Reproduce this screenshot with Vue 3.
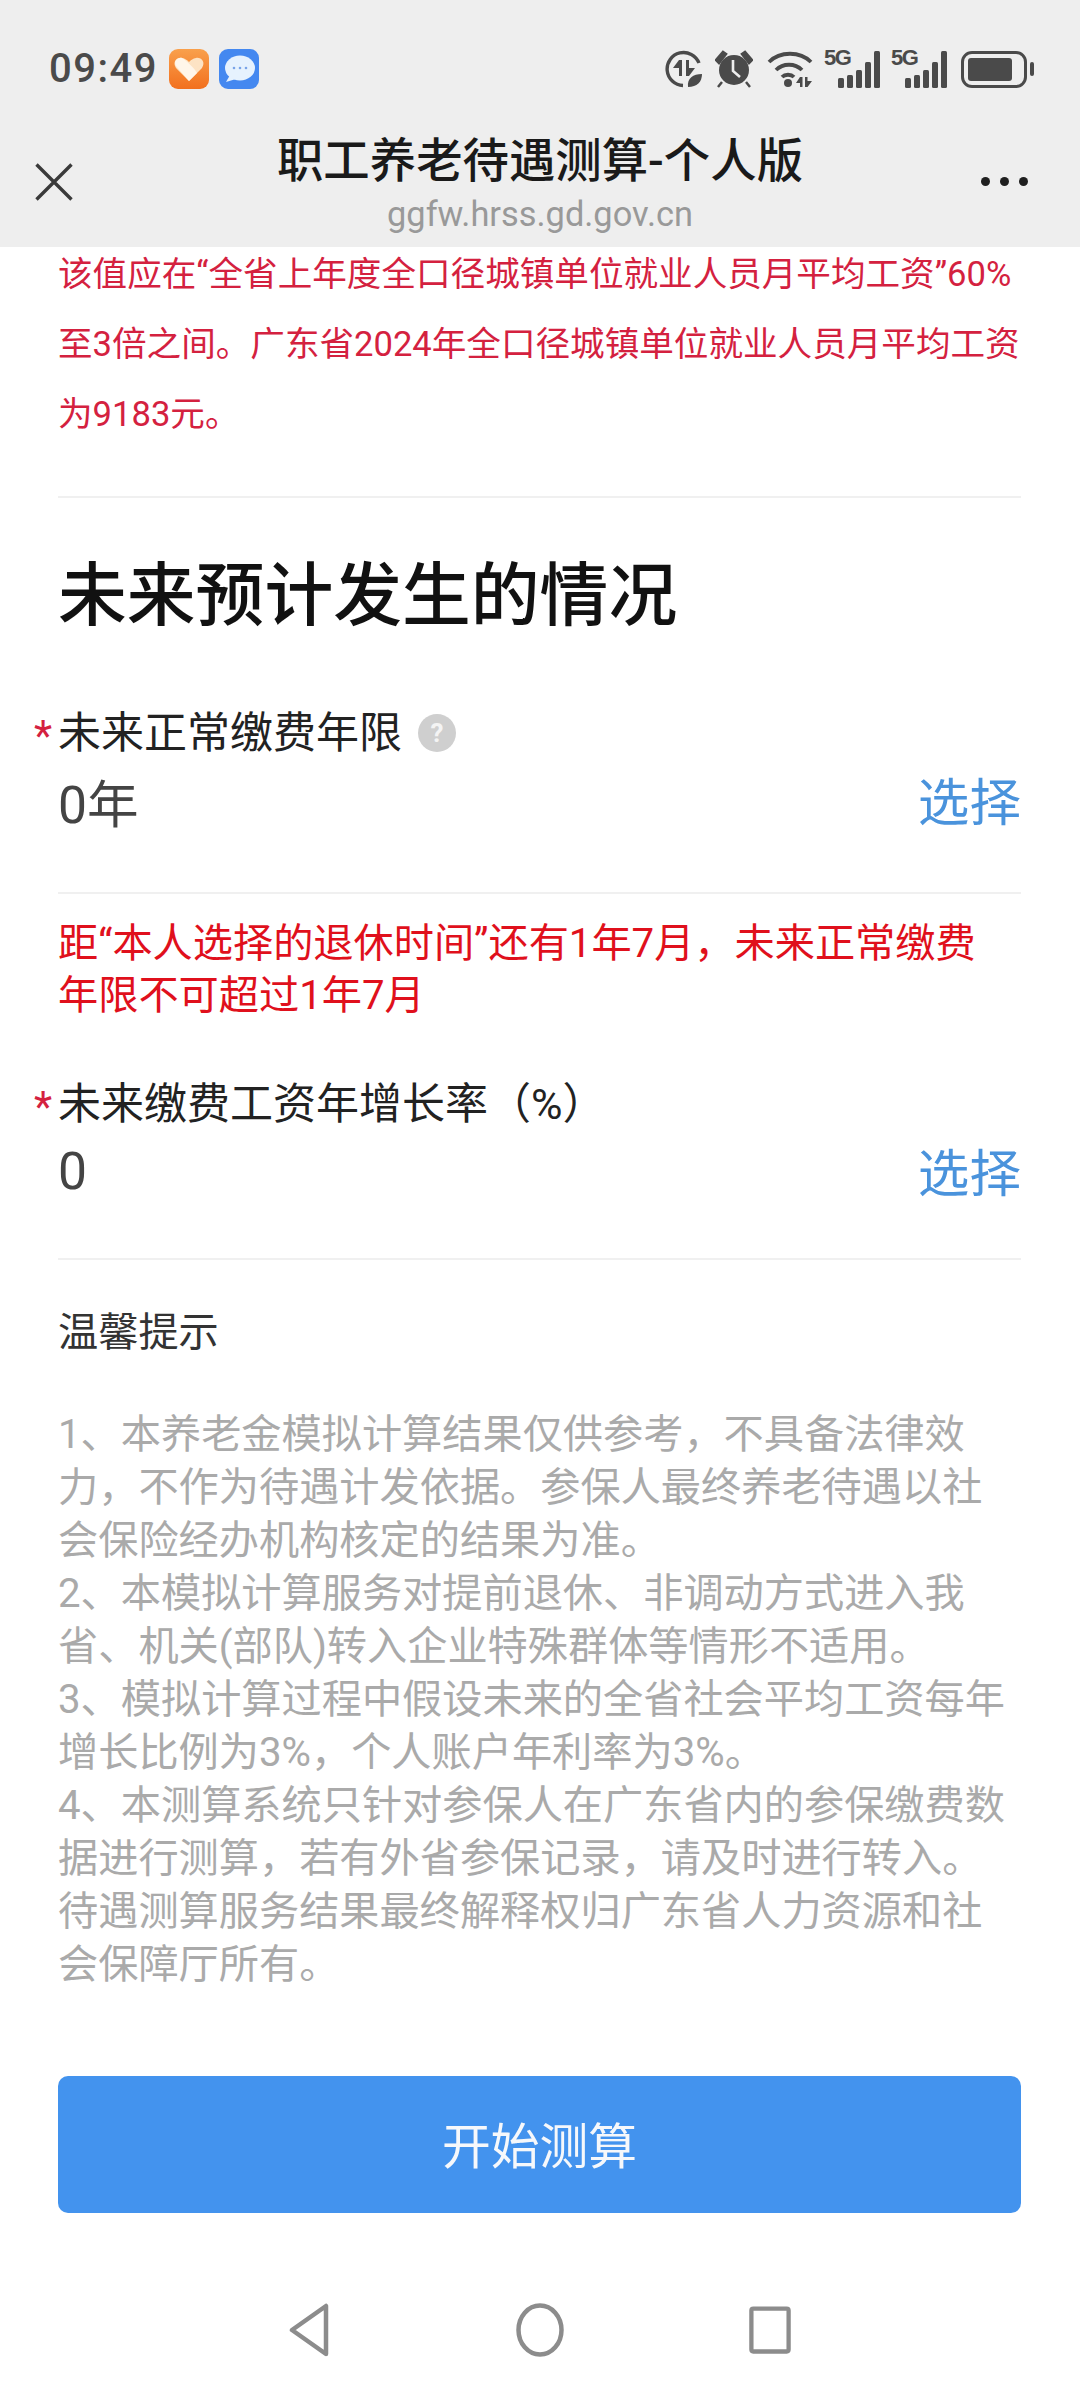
<template>
  <div class="page">
    <header class="top">
      <div class="status">
        <span class="time">09:49</span>
        <svg class="app" viewBox="0 0 40 40">
          <defs>
            <linearGradient id="org" x1="0" y1="0" x2="0" y2="1"><stop offset="0" stop-color="#f9a04c" /><stop offset="1" stop-color="#f2701e" /></linearGradient>
          </defs>
          <rect width="40" height="40" rx="9" fill="url(#org)" />
          <path d="M20 32 L7 19 C3 13 8 8 13 9 C16 9.500 18 11 20 13 C22 11 24 9.500 27 9 C32 8 37 13 33 19 Z" fill="#fde3c4" />
          <path d="M7 17 C4 12 9 8 13 9 C16 10 26 20 28 24 L20 32 Z" fill="#fff6ea" />
        </svg>
        <svg class="app app2" viewBox="0 0 40 40">
          <rect width="40" height="40" rx="9" fill="#4488f0" />
          <ellipse cx="21" cy="19" rx="15" ry="12.500" fill="#e6f2fe" />
          <path d="M11 26 L7 33 L17 30 Z" fill="#e6f2fe" />
          <circle cx="15" cy="19" r="1.300" fill="#7aa4e8" />
          <circle cx="21" cy="19" r="1.300" fill="#7aa4e8" />
          <circle cx="27" cy="19" r="1.300" fill="#7aa4e8" />
        </svg>
        <div class="status-right">
          <svg class="ic-data" viewBox="0 0 38 38">
            <path d="M34 13 A16.500 16.500 0 1 0 18 35.500" fill="none" stroke="#4a4a4a" stroke-width="3.400" />
            <path d="M14 10 V26 H17 V10 Z M14 10 L8 18 H14 Z M21 26 V10 H24 V26 Z M24 26 L30 18 H24 Z" fill="#4a4a4a" />
            <path d="M23 37 C22 28 28 24 37 24 C37 32 32 37 23 37 Z" fill="#4a4a4a" />
          </svg>
          <svg class="ic-alarm" viewBox="0 0 38 38">
            <circle cx="19" cy="20" r="15" fill="#4a4a4a" />
            <path d="M1 10 L8 2 L11 4 L4 13 Z M37 10 L30 2 L27 4 L34 13 Z M7 32 L3 37 M31 32 L35 37" fill="#4a4a4a" stroke="#4a4a4a" stroke-width="2.500" />
            <path d="M18 10 V21 L25 27" fill="none" stroke="#eee" stroke-width="2.600" />
          </svg>
          <svg class="ic-wifi" viewBox="0 0 46 38">
            <path d="M2 12 C13 1 33 1 44 12 M9 20 C16 13 28 13 35 20 M15 27 C18 24 24 24 27 27" fill="none" stroke="#4a4a4a" stroke-width="3.800" />
            <circle cx="21" cy="33" r="4" fill="#4a4a4a" />
            <path d="M33 27 V37 H35.500 V27 Z M33 27 L29 33 H33 Z M38 37 V27 H40.500 V37 Z M40.500 37 L45 31 H40.500 Z" fill="#4a4a4a" />
          </svg>
          <div class="sig">
            <span>5G</span>
            <i class="b0"></i><i class="b1"></i><i class="b2"></i><i class="b3"></i><i class="b4"></i>
          </div>
          <div class="sig sig2">
            <span>5G</span>
            <i class="b0"></i><i class="b1"></i><i class="b2"></i><i class="b3"></i><i class="b4"></i>
          </div>
          <div class="bat"><div class="bat-body"><div class="bat-fill"></div></div><div class="bat-cap"></div></div>
        </div>
      </div>
      <div class="titlebar">
        <svg class="close" viewBox="0 0 38 38">
          <path d="M1.500 1.500 L36.500 36.500 M36.500 1.500 L1.500 36.500" stroke="#3a3a3a" stroke-width="3.400" fill="none" />
        </svg>
        <div class="title-wrap">
          <div class="title">职工养老待遇测算-个人版</div>
          <div class="url">ggfw.hrss.gd.gov.cn</div>
        </div>
        <div class="dots"><i></i><i></i><i></i></div>
      </div>
    </header>

    <main class="content">
      <p class="note">该值应在“全省上年度全口径城镇单位就业人员月平均工资”60%至3倍之间。广东省2024年全口径城镇单位就业人员月平均工资为9183元。</p>
      <div class="line first"></div>
      <h2 class="heading">未来预计发生的情况</h2>

      <div class="field">
        <div class="label"><span class="star">*</span>未来正常缴费年限<span class="help">?</span></div>
        <div class="row"><span class="val">0年</span><span class="pick">选择</span></div>
      </div>
      <div class="line"></div>
      <p class="warn">距“本人选择的退休时间”还有1年7月，未来正常缴费年限不可超过1年7月</p>

      <div class="field field2">
        <div class="label"><span class="star">*</span>未来缴费工资年增长率（%）</div>
        <div class="row"><span class="val">0</span><span class="pick">选择</span></div>
      </div>
      <div class="line"></div>

      <div class="tip-title">温馨提示</div>
      <div class="tips">
        <p v-for="t in tips" :key="t">{{ t }}</p>
      </div>

      <button class="start">开始测算</button>
    </main>

    <footer class="nav">
      <svg class="nav-back" viewBox="0 0 42 54">
        <path d="M37 3 V51 L3 27 Z" fill="none" stroke="#8c8c8c" stroke-width="4.500" stroke-linejoin="round" />
      </svg>
      <svg class="nav-home" viewBox="0 0 48 54">
        <ellipse cx="24" cy="27" rx="21.500" ry="24.500" fill="none" stroke="#8c8c8c" stroke-width="4.500" />
      </svg>
      <svg class="nav-recent" viewBox="0 0 44 50">
        <rect x="2.500" y="2.500" width="39" height="45" rx="2" fill="none" stroke="#8c8c8c" stroke-width="4.500" />
      </svg>
    </footer>
  </div>
</template>

<script setup>
const tips = [
  '1、本养老金模拟计算结果仅供参考，不具备法律效力，不作为待遇计发依据。参保人最终养老待遇以社会保险经办机构核定的结果为准。',
  '2、本模拟计算服务对提前退休、非调动方式进入我省、机关(部队)转入企业特殊群体等情形不适用。',
  '3、模拟计算过程中假设未来的全省社会平均工资每年增长比例为3%，个人账户年利率为3%。',
  '4、本测算系统只针对参保人在广东省内的参保缴费数据进行测算，若有外省参保记录，请及时进行转入。',
  '待遇测算服务结果最终解释权归广东省人力资源和社会保障厅所有。'
]
</script>

<style>
html, body { margin: 0; background: #fff; }
</style>

<style scoped>
.page {
  width: 1080px;
  height: 2387px;
  overflow: hidden;
  display: flex;
  flex-direction: column;
  background: #fff;
  font-family: Roboto, "Noto Sans CJK SC", sans-serif;
}
.top {
  height: 247px;
  flex: none;
  background: #eeeeee;
  position: relative;
  z-index: 1;
}
.status {
  height: 138px;
  box-sizing: border-box;
  padding: 49px 46px 0 49px;
  display: flex;
  align-items: flex-start;
}
.time {
  font: 500 40px/40px Roboto, sans-serif;
  color: #4a4a4a;
  letter-spacing: 1.500px;
  width: 120px;
}
.app { width: 40px; height: 40px; }
.app2 { margin-left: 10px; }
.status-right {
  margin-left: auto;
  display: flex;
  align-items: center;
  height: 40px;
}
.ic-data, .ic-alarm { width: 38px; height: 38px; }
.ic-alarm { margin-left: 12px; }
.ic-wifi { width: 46px; height: 38px; margin-left: 14px; }
.sig {
  position: relative;
  width: 56px;
  height: 38px;
  margin-left: 11px;
  display: flex;
  align-items: flex-end;
  justify-content: flex-end;
  gap: 3px;
}
.sig2 { margin-left: 11px; }
.sig span {
  position: absolute;
  left: 0;
  top: -3px;
  font: 700 22px/22px "Liberation Sans", sans-serif;
  color: #4a4a4a;
  letter-spacing: -1.500px;
}
.sig i { width: 6px; background: #4a4a4a; border-radius: 1.500px; }
.b0 { height: 10px; }
.b1 { height: 13px; }
.b2 { height: 18px; }
.b3 { height: 26px; }
.b4 { height: 37px; }
.bat { display: flex; align-items: center; margin-left: 14px; }
.bat-body {
  width: 66px;
  height: 37px;
  box-sizing: border-box;
  border: 3px solid #4a4a4a;
  border-radius: 11px;
  padding: 4px;
}
.bat-fill { width: 44px; height: 100%; background: #4a4a4a; border-radius: 3px; }
.bat-cap { width: 4px; height: 14px; margin-left: 3px; background: #4a4a4a; border-radius: 2px; }

.titlebar {
  position: relative;
  height: 109px;
  display: flex;
  justify-content: center;
}
.close {
  position: absolute;
  left: 35px;
  top: 25px;
  width: 38px;
  height: 38px;
}
.title-wrap { text-align: center; }
.title {
  font-size: 46.400px;
  line-height: 50px;
  font-weight: 500;
  color: #1a1a1a;
  margin-top: -2px;
}
.url {
  font-size: 34.400px;
  line-height: 36px;
  color: #999;
  margin-top: 10px;
}
.dots {
  position: absolute;
  right: 52px;
  top: 39px;
  display: flex;
  gap: 10px;
}
.dots i { width: 9px; height: 9px; border-radius: 50%; background: #1f1f1f; }

.content {
  flex: 1;
  padding: 0 59px 0 58px;
  margin-top: -10px;
}
.note {
  margin: 2px 0 0;
  font-size: 34.600px;
  line-height: 70px;
  color: #d4213f;
}
.line { height: 2px; background: #f0f0f0; }
.first { margin-top: 47px; }
.heading {
  margin: 54px 0 0;
  font-size: 68.800px;
  line-height: 90px;
  font-weight: 500;
  color: #111;
}
.field { margin-top: 63px; }
.field2 { margin-top: 54px; }
.label {
  position: relative;
  display: flex;
  align-items: center;
  font-size: 43px;
  line-height: 56px;
  color: #222;
}
.star {
  position: absolute;
  left: -24px;
  top: 3px;
  font-size: 42px;
  color: #d4213f;
}
.help {
  width: 38px;
  height: 38px;
  margin-left: 16px;
  border-radius: 50%;
  background: #cfcfcf;
  color: #f4f4f4;
  font-size: 26px;
  line-height: 38px;
  text-align: center;
  font-weight: 700;
}
.row {
  display: flex;
  justify-content: space-between;
  align-items: center;
  height: 70px;
  margin-top: 4px;
  margin-bottom: 57px;
}
.field2 .row { margin-bottom: 52px; }
.val { font-size: 51.600px; color: #444; }
.pick { font-size: 51.600px; color: #4a93dc; margin-bottom: 4px; }
.warn {
  margin: 24px 0 0;
  padding-right: 20px;
  font-size: 40.200px;
  line-height: 52px;
  color: #e0101c;
}
.tip-title {
  margin-top: 47px;
  font-size: 40.200px;
  line-height: 52px;
  color: #333;
}
.tips {
  margin-top: 49px;
  font-size: 40.200px;
  line-height: 53px;
  color: #aaa;
}
.tips p { margin: 0; }
.start {
  display: block;
  width: 100%;
  height: 137px;
  margin-top: 85px;
  padding: 0 0 5px;
  border: 0;
  border-radius: 10px;
  background: #4393ee;
  color: #f6f8fb;
  font-family: inherit;
  font-size: 48.800px;
}

.nav {
  flex: none;
  height: 114px;
  padding-top: 6px;
  position: relative;
  display: flex;
  align-items: center;
  justify-content: flex-start;
}
.nav-back { width: 42px; height: 54px; margin-left: 289px; }
.nav-home { width: 48px; height: 54px; margin-left: 185px; }
.nav-recent { width: 42px; height: 50px; margin-left: 185px; }
</style>
